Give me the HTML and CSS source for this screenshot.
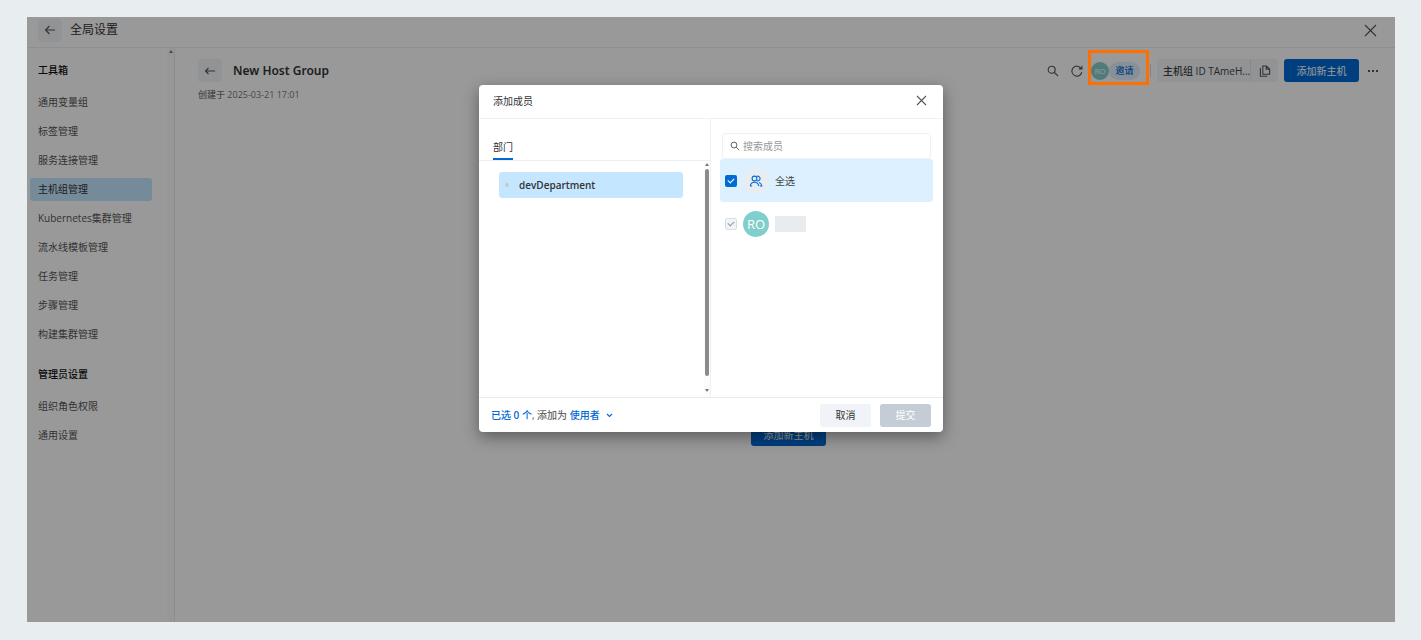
FILE: index.html
```html
<!DOCTYPE html>
<html lang="zh-CN">
<head>
<meta charset="utf-8">
<title>全局设置</title>
<link rel="stylesheet" href="styles.css">
</head>
<body>
<div class="app">
  <header class="topbar">
    <button class="icon-btn" aria-label="返回"><svg width="12" height="12" viewBox="0 0 12 12"><path d="M11 6H1.5M5.500 2L1.500 6l4 4"/></svg></button>
    <span class="topbar-title">全局设置</span>
    <button class="plain close-page" aria-label="关闭"><svg width="13" height="13" viewBox="0 0 13 13"><path d="M1 1l11 11M12 1L1 12"/></svg></button>
  </header>
  <div class="body">
    <nav class="sidebar">
      <div class="menu">
        <h2>工具箱</h2>
        <a href="#">通用变量组</a>
        <a href="#">标签管理</a>
        <a href="#">服务连接管理</a>
        <a href="#" class="active">主机组管理</a>
        <a href="#">Kubernetes集群管理</a>
        <a href="#">流水线模板管理</a>
        <a href="#">任务管理</a>
        <a href="#">步骤管理</a>
        <a href="#">构建集群管理</a>
        <h2>管理员设置</h2>
        <a href="#">组织角色权限</a>
        <a href="#">通用设置</a>
      </div>
      <div class="rail"><i class="up"></i></div>
    </nav>
    <main class="main">
      <div class="page-head">
        <button class="icon-btn" aria-label="返回"><svg width="12" height="12" viewBox="0 0 12 12"><path d="M11 6H1.500M4.500 3l-3 3 3 3"/></svg></button>
        <h1>New Host Group</h1>
        <div class="tools">
          <button class="plain" aria-label="搜索"><svg width="12" height="12" viewBox="0 0 12 12"><circle cx="4.700" cy="4.700" r="3.500"/><path d="M7.300 7.300L11 11"/></svg></button>
          <button class="plain refresh" aria-label="刷新"><svg width="12" height="12" viewBox="0 0 12 12"><path d="M10.200 3.600A5 5 0 1 0 10.800 7.200M10.900.8v3.100H7.800"/></svg></button>
          <div class="members">
            <span class="avatar small">RO</span>
            <button class="invite">邀请</button>
          </div>
          <span class="sep"></span>
          <div class="host-id">
            <span>主机组 ID TAmeH...</span>
            <button class="plain copy" aria-label="复制"><svg width="12" height="12" viewBox="0 0 12 12"><path d="M3.800 1h3.600l3.200 3v5.200H3.800zM7.200 1v3.200h3.400M1.400 3v8.200h6.800"/></svg></button>
          </div>
          <button class="primary">添加新主机</button>
          <button class="plain more" aria-label="更多"><svg width="12" height="4" viewBox="0 0 12 4"><path class="fill" d="M1 1h2v2H1zM5 1h2v2H5zM9 1h2v2H9z"/></svg></button>
        </div>
      </div>
      <p class="created">创建于 2025-03-21 17:01</p>
      <div class="empty"><button class="primary">添加新主机</button></div>
    </main>
  </div>
  <div class="overlay">
    <section class="dialog" role="dialog" aria-label="添加成员">
      <header class="dialog-head">
        <h2>添加成员</h2>
        <button class="plain" aria-label="关闭"><svg width="11" height="11" viewBox="0 0 11 11"><path d="M1 1l9 9M10 1l-9 9"/></svg></button>
      </header>
      <div class="dialog-body">
        <div class="departments">
          <div class="tabs"><button class="tab">部门</button></div>
          <div class="tree">
            <div class="tree-list"><button class="node"><i></i>devDepartment</button></div>
            <div class="scroll"><i class="up"></i><b></b><i class="down"></i></div>
          </div>
        </div>
        <div class="people">
          <div class="search">
            <svg width="10" height="10" viewBox="0 0 12 12"><circle cx="4.800" cy="4.800" r="3.500"/><path d="M7.400 7.400L11 11"/></svg>
            <input type="text" placeholder="搜索成员" aria-label="搜索成员">
          </div>
          <label class="person all">
            <input type="checkbox" checked>
            <span class="avatar group"><svg width="14" height="12" viewBox="0 0 14 12"><circle cx="5.500" cy="3.500" r="2.400"/><path d="M8 1.200a2.400 2.400 0 1 1 0 4.600M1.200 11c.6-2.500 2.200-3.700 4.300-3.700S9.200 8.500 9.800 11M1.200 11h2M10 7.400c1.600.5 2.500 1.700 2.900 3.600h-2"/></svg></span>
            <span>全选</span>
          </label>
          <label class="person">
            <input type="checkbox" checked disabled aria-label="RO">
            <span class="avatar">RO</span>
            <span class="name"></span>
          </label>
        </div>
      </div>
      <footer class="dialog-foot">
        <p><em>已选 <strong>0</strong> 个</em>, 添加为 <button class="role">使用者<svg width="7" height="5" viewBox="0 0 7 5"><path d="M1 1l2.500 2.500L6 1"/></svg></button></p>
        <button class="cancel">取消</button>
        <button class="submit" disabled>提交</button>
      </footer>
    </section>
  </div>
  <div class="highlight"></div>
</div>
</body>
</html>
```
FILE: styles.css
```css
* { box-sizing: border-box; }
html, body { height: 100%; }
body {
  margin: 0;
  padding: 17px 26px 18px 27px;
  background: #e8edf0;
  color: #333;
  font: 10px/16px "Open Sans", "Noto Sans CJK SC", sans-serif;
}
h1, h2, p { margin: 0; font-weight: 500; }
button, input { font: inherit; color: inherit; }
button { margin: 0; padding: 0; border: 0; background: none; }
a { color: inherit; text-decoration: none; }
svg { display: block; fill: none; stroke: currentColor; stroke-width: 1.1; }
.fill { fill: currentColor; stroke: none; }

.app {
  position: relative;
  display: flex;
  flex-direction: column;
  height: 100%;
  overflow: hidden;
  background: #fff;
}
.plain { display: flex; align-items: center; justify-content: center; color: #555; }
.icon-btn {
  display: flex;
  align-items: center;
  justify-content: center;
  width: 24px;
  height: 23px;
  border-radius: 3px;
  background: #f2f5f9;
  color: #555;
}
.topbar {
  display: flex;
  align-items: center;
  flex: none;
  height: 31px;
  padding: 0 18px 4px 11px;
  border-bottom: 1px solid #ebeef2;
}
.topbar-title { margin-left: 8px; font-size: 12px; }
.close-page { margin-left: auto; }

.body { display: flex; flex: 1; min-height: 0; }
.sidebar { display: flex; flex: none; width: 148px; border-right: 1px solid #e8ebef; }
.menu { display: flex; flex-direction: column; flex: 1; gap: 6px; padding: 11px 15px 0 3px; }
.menu a, .menu h2 { padding: 0 8px; font-size: 10px; line-height: 23px; white-space: nowrap; }
.menu h2 { margin-bottom: 3px; color: #111; }
.menu a + h2 { margin-top: 11px; }
.menu a { border-radius: 3px; color: #555; }
.menu .active { background: #c4e8ff; color: #333; }
.rail { width: 7px; padding-top: 2px; background: #fcfcfc; }
.up, .down { display: block; width: 4px; margin: 0 auto; border: 2px solid transparent; border-top-width: 0; border-bottom: 3px solid #777; }
.down { border-bottom-width: 0; border-top: 3px solid #777; }

.main { display: flex; flex-direction: column; flex: 1; min-width: 0; padding: 11px 16px 0 23px; }
.page-head { display: flex; align-items: center; }
.page-head h1 { margin-left: 11px; font-family: "Noto Sans", sans-serif; font-size: 12px; font-weight: 600; }
.tools { display: flex; align-items: center; margin-left: auto; }
.refresh { margin-left: 12px; }
.members { display: flex; align-items: center; margin: 0 10px 0 8px; }
.avatar {
  display: flex;
  align-items: center;
  justify-content: center;
  flex: none;
  width: 26px;
  height: 26px;
  border-radius: 50%;
  background: #80cfcc;
  color: #fff;
  font-size: 13px;
  font-weight: 500;
}
.avatar.small { width: 18px; height: 18px; font-size: 8px; }
.invite { width: 31px; height: 18px; border-radius: 9px; background: #e1f0ff; color: #006ad4; font-size: 9px; font-weight: 500; }
.sep { width: 1px; height: 13px; background: #d9dde2; }
.host-id { display: flex; align-items: center; margin: 0 6px; height: 23px; border-radius: 3px; background: #f2f5f9; color: #444; font-weight: 500; }
.host-id span { padding: 0 0 0 6px; width: 93px; white-space: nowrap; }
.copy { width: 28px; height: 23px; border-left: 1px solid #e2e6ea; }
.primary { width: 75px; height: 23px; border-radius: 3px; background: #006ad4; color: #fff; }
.more { margin-left: 8px; }
.created { margin-top: 5px; color: #777; font-size: 9px; }
.empty { display: flex; justify-content: center; padding-top: 320px; }

.overlay {
  position: absolute;
  inset: 0;
  display: flex;
  align-items: flex-start;
  justify-content: center;
  padding-top: 68px;
  background: rgba(0, 0, 0, .4);
}
.dialog {
  display: flex;
  flex-direction: column;
  width: 464px;
  border-radius: 4px;
  background: #fff;
  box-shadow: 0 5px 16px rgba(0, 0, 0, .4);
}
.dialog-head { display: flex; align-items: center; justify-content: space-between; height: 34px; padding: 0 16px 2px 14px; border-bottom: 1px solid #eff1f3; }
.dialog-head h2 { font-size: 10px; font-weight: 400; }
.dialog-body { display: flex; height: 278px; }
.departments { display: flex; flex-direction: column; width: 232px; border-right: 1px solid #edf0f3; }
.tabs { display: flex; align-items: flex-end; height: 42px; padding-left: 14px; border-bottom: 1px solid #edf0f3; }
.tab { height: 24px; border-bottom: 2px solid #006ad4; }
.tree { display: flex; flex: 1; }
.tree-list { flex: 1; padding: 11px 21px 0 20px; }
.node { display: flex; align-items: center; width: 100%; height: 26px; padding-left: 6px; border-radius: 3px; background: #c4e7ff; font-weight: 600; }
.node i { width: 4px; height: 4px; margin-right: 10px; border-radius: 50%; background: #c3c9ce; }
.scroll { display: flex; flex-direction: column; gap: 3px; width: 6px; padding: 2px 0 5px; background: #fcfcfc; }
.scroll b { flex: 1; margin: 0 1px; border-radius: 2px; background: #8b8b8b; }
.scroll .down { margin-top: 10px; }

.people { flex: 1; padding: 14px 10px 0 9px; }
.search { display: flex; align-items: center; gap: 3px; height: 26px; margin: 0 2px; padding-left: 7px; border: 1px solid #eff1f3; border-radius: 3px; color: #555; }
.search input { flex: 1; min-width: 0; padding: 0; border: 0; outline: 0; background: none; }
.search input::placeholder { color: #999; }
.person { display: flex; align-items: center; gap: 6px; height: 43px; padding-left: 5px; border-radius: 3px; color: #444; }
.person.all { background: #dcf0ff; }
.person input {
  appearance: none;
  display: grid;
  place-items: center;
  width: 12px;
  height: 12px;
  margin: 0;
  border-radius: 2px;
  background: #006ad4;
}
.person input::after { content: ""; width: 5px; height: 3px; margin-bottom: 2px; border: solid #fff; border-width: 0 0 1px 1px; transform: rotate(-45deg); }
.person input:disabled { border: 1px solid #dadfe4; background: #f0f3f7; }
.person input:disabled::after { border-color: #999; }
.avatar.group { background: #e8edf1; color: #006ad4; }
.name { width: 31px; height: 16px; background: #e8ecef; }

.dialog-foot { display: flex; align-items: center; gap: 9px; height: 35px; padding: 0 12px; border-top: 1px solid #e8ebee; }
.dialog-foot p { margin-right: auto; color: #666; }
.dialog-foot em, .role { color: #006ad4; font-style: normal; }
.dialog-foot strong { font-weight: 600; }
.role svg { display: inline-block; margin: 0 0 1px 6px; }
.cancel, .submit { width: 51px; height: 23px; border-radius: 3px; background: #f0f4f8; }
.submit { background: #c4ccd5; color: #fff; }

.highlight { position: absolute; top: 33px; right: 246px; width: 61px; height: 35px; border: 3px solid #ff6f00; }
```
